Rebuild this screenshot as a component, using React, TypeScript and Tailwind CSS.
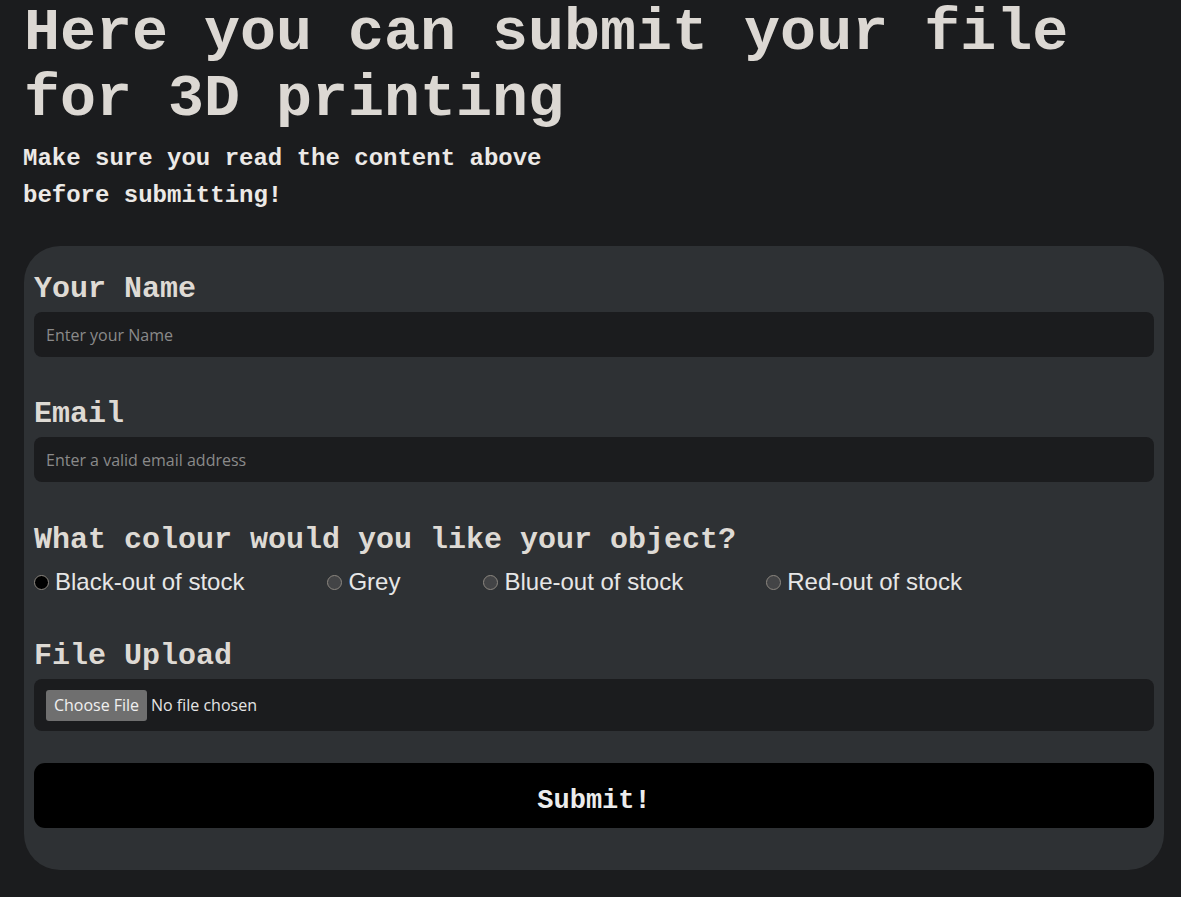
import React from 'react'

const mono = "font-['Liberation_Mono','Courier_New',monospace] font-bold"
const sans = "font-['Open_Sans','Noto_Sans',sans-serif]"

const colours = [
  { label: 'Black-out of stock', checked: true },
  { label: 'Grey', checked: false },
  { label: 'Blue-out of stock', checked: false },
  { label: 'Red-out of stock', checked: false },
]

function Label({ children }: { children: React.ReactNode }) {
  return <div className={`${mono} text-[30px] leading-[36px] text-[#dedad4]`}>{children}</div>
}

export default function App() {
  return (
    <div className="min-h-[897px] w-full bg-[#1b1c1e] pt-0 pb-[27px]">
      <h1 className={`${mono} ml-[24px] text-[60px] leading-[66px] text-[#dcd8d3]`}>
        Here you can submit your file for 3D printing
      </h1>
      <p className={`${mono} ml-[23px] mt-[8px] w-[560px] text-[24px] leading-[37px] text-[#ece9e6]`}>
        Make sure you read the content above before submitting!
      </p>

      {/* Form card */}
      <form className="ml-[24px] mt-[32px] w-[1140px] rounded-[36px] bg-[#2e3134] px-[10px] pt-[25px] pb-[42px]">
        <Label>Your Name</Label>
        <div className={`${sans} mt-[5px] flex h-[45px] items-center rounded-[8px] bg-[#1b1c1e] pl-[12px] text-[16px] text-[#8a8a8a]`}>
          Enter your Name
        </div>

        <div className="mt-[39px]">
          <Label>Email</Label>
        </div>
        <div className={`${sans} mt-[5px] flex h-[45px] items-center rounded-[8px] bg-[#1b1c1e] pl-[12px] text-[16px] text-[#8a8a8a]`}>
          Enter a valid email address
        </div>

        <div className="mt-[40px]">
          <Label>What colour would you like your object?</Label>
        </div>
        <div className="mt-[10px] flex h-[28px] items-center gap-[83px] font-['Liberation_Sans',Arial,sans-serif] text-[24px] text-[#e6e6e6]">
          {colours.map((c) => (
            <label key={c.label} className="flex items-center gap-[6px]">
              <span
                className={`h-[15px] w-[15px] rounded-full border-[1.5px] border-[#8c8780] ${
                  c.checked ? 'bg-black' : 'bg-[#434446]'
                }`}
              />
              <span>{c.label}</span>
            </label>
          ))}
        </div>

        <div className="mt-[42px]">
          <Label>File Upload</Label>
        </div>
        <div className={`${sans} mt-[5px] flex h-[52px] items-center gap-[4px] rounded-[8px] bg-[#1b1c1e] pl-[12px] text-[16px]`}>
          <span className="flex h-[31px] w-[101px] items-center justify-center rounded-[3px] bg-[#6f6f6f] text-[#f0f0f0]">
            Choose File
          </span>
          <span className="text-[#e4e4e4]">No file chosen</span>
        </div>

        <button
          type="button"
          className={`${mono} mt-[32px] flex h-[65px] w-full items-center justify-center rounded-[11px] bg-black pt-[12px] text-[27px] text-[#ececec]`}
        >
          Submit!
        </button>
      </form>
    </div>
  )
}
